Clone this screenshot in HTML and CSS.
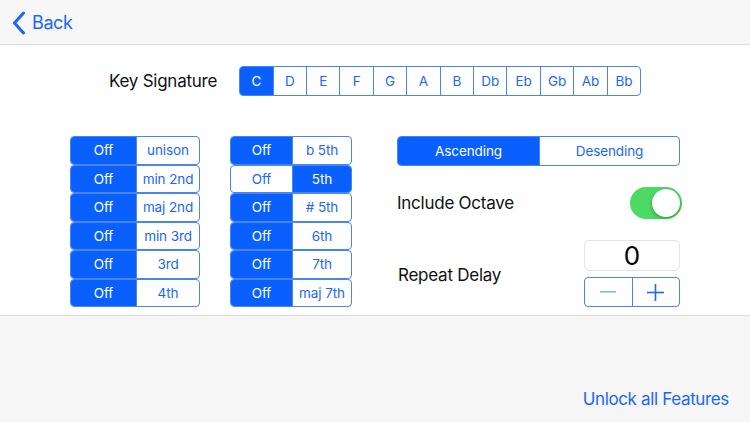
FILE: index.html
```html
<!DOCTYPE html>
<html>
<head>
<meta charset="utf-8">
<link rel="stylesheet" href="styles.css">
</head>
<body>
<div class="app">
  <header class="nav">
    <a class="back">
      <svg class="chev" width="14" height="24" viewBox="0 0 14 24"><path d="M11.5 2 L2.5 12 L11.5 22" fill="none" stroke="#1a66ff" stroke-width="3" stroke-linecap="round" stroke-linejoin="round"/></svg>
      <span>Back</span>
    </a>
  </header>
  <main class="content">
    <div class="keyrow">
      <span class="label">Key Signature</span>
      <div class="seg keys">
        <span class="on">C</span><span>D</span><span>E</span><span>F</span><span>G</span><span>A</span><span>B</span><span>Db</span><span>Eb</span><span>Gb</span><span>Ab</span><span>Bb</span>
      </div>
    </div>
    <div class="lower">
      <div class="col c1">
        <div class="seg row"><span class="on">Off</span><span>unison</span></div>
        <div class="seg row"><span class="on">Off</span><span>min 2nd</span></div>
        <div class="seg row"><span class="on">Off</span><span>maj 2nd</span></div>
        <div class="seg row"><span class="on">Off</span><span>min 3rd</span></div>
        <div class="seg row"><span class="on">Off</span><span>3rd</span></div>
        <div class="seg row"><span class="on">Off</span><span>4th</span></div>
      </div>
      <div class="col c2">
        <div class="seg row"><span class="on">Off</span><span>b 5th</span></div>
        <div class="seg row"><span>Off</span><span class="on">5th</span></div>
        <div class="seg row"><span class="on">Off</span><span># 5th</span></div>
        <div class="seg row"><span class="on">Off</span><span>6th</span></div>
        <div class="seg row"><span class="on">Off</span><span>7th</span></div>
        <div class="seg row"><span class="on">Off</span><span>maj 7th</span></div>
      </div>
      <div class="right">
        <div class="seg dir"><span class="on">Ascending</span><span>Desending</span></div>
        <div class="octave">
          <span class="label">Include Octave</span>
          <div class="toggle"><div class="knob"></div></div>
        </div>
        <div class="delay">
          <span class="label">Repeat Delay</span>
          <div class="stepbox">
            <div class="value">0</div>
            <div class="seg stepper">
              <span class="minus"><svg width="16" height="2" viewBox="0 0 16 2"><rect width="16" height="1.6" fill="#8fb3f5"/></svg></span>
              <span><svg width="17" height="17" viewBox="0 0 17 17"><rect x="0" y="7.7" width="17" height="1.6" fill="#1a66ff"/><rect x="7.7" y="0" width="1.6" height="17" fill="#1a66ff"/></svg></span>
            </div>
          </div>
        </div>
      </div>
    </div>
  </main>
  <footer class="foot">
    <a class="unlock">Unlock all Features</a>
  </footer>
</div>
</body>
</html>
```
FILE: styles.css
```css
* { box-sizing: border-box; }
html, body { margin: 0; padding: 0; }
body {
  width: 750px;
  height: 422px;
  overflow: hidden;
  font-family: Inter, "Noto Sans", sans-serif;
  background: #fff;
}
.app { display: flex; flex-direction: column; height: 422px; }
.nav {
  height: 45px;
  background: #f7f7f7;
  border-bottom: 1px solid #dadada;
  display: flex;
  align-items: center;
  padding-left: 12px;
}
.back {
  display: flex;
  align-items: center;
  gap: 6px;
  color: #1a66ff;
  font-size: 18px;
  letter-spacing: -0.4px;
  padding-top: 1px;
}
.content {
  height: 271px;
  background: #fff;
  border-bottom: 1px solid #dadada;
}
.label { color: #111; font-size: 17px; letter-spacing: -0.25px; }
.keyrow {
  display: flex;
  align-items: center;
  padding-left: 109px;
  padding-top: 21px;
  gap: 22px;
}
.seg {
  display: flex;
  border: 1px solid #4a86f0;
  border-radius: 4px;
  overflow: hidden;
  background: #fff;
}
.seg span {
  display: flex;
  align-items: center;
  justify-content: center;
  color: #1a66ff;
  font-size: 13.5px;
  letter-spacing: -0.1px;
}
.seg span + span { border-left: 1px solid #4a86f0; }
.seg span.on { background: #0a60ff; color: #fff; }
.keys { height: 30px; width: 402px; }
.keys span { flex: 1; }
.lower {
  display: flex;
  padding-top: 40px;
  padding-left: 70px;
}
.col { display: flex; flex-direction: column; }
.row { height: 28.5px; }
.c1 { width: 130px; }
.c1 .row span:first-child { width: 65px; }
.c1 .row span:last-child { flex: 1; }
.c2 { width: 122px; margin-left: 30px; }
.c2 .row span:first-child { width: 61px; }
.c2 .row span:last-child { flex: 1; }
.right { margin-left: 45px; width: 283px; display: flex; flex-direction: column; }
.dir { height: 30px; width: 283px; }
.dir span { flex: 1; }
.dir span:first-child { flex: 0 0 141px; }
.octave {
  display: flex;
  align-items: center;
  justify-content: space-between;
  margin-top: 21px;
  height: 32px;
}
.toggle {
  width: 52px;
  height: 32px;
  border-radius: 16px;
  background: #4cd964;
  position: relative;
  margin-right: -2px;
}
.knob {
  position: absolute;
  right: 2px;
  top: 2px;
  width: 28px;
  height: 28px;
  border-radius: 50%;
  background: #fff;
  box-shadow: 0 2px 4px rgba(0,0,0,0.25), 0 0 1px rgba(0,0,0,0.2);
}
.delay {
  display: flex;
  align-items: center;
  justify-content: space-between;
  margin-top: 21px;
}
.delay .label { margin-left: 1px; margin-top: 2px; }
.stepbox { display: flex; flex-direction: column; gap: 6px; width: 96px; }
.value {
  height: 31px;
  border: 1px solid #e4e4e4;
  border-radius: 5px;
  display: flex;
  align-items: center;
  justify-content: center;
  font-size: 26px;
  color: #000;
}
.stepper { height: 30px; }
.stepper span { flex: 1; }
.foot {
  flex: 1;
  background: #f6f6f6;
  display: flex;
  justify-content: flex-end;
  align-items: flex-end;
  padding: 0 21px 13px 0;
}
.unlock { color: #1a66ff; font-size: 17px; letter-spacing: -0.35px; }
```
